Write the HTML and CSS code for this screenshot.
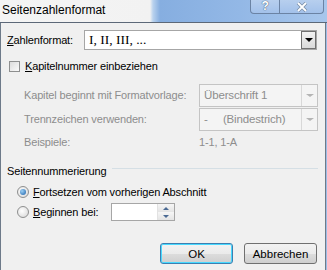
FILE: index.html
```html
<!DOCTYPE html>
<html lang="de">
<head>
    <meta charset="UTF-8">
    <title>Seitenzahlenformat</title>
    <link rel="stylesheet" href="styles.css">
</head>
<body>
    <div class="window">
        <div class="titlebar">
            <span class="title">Seitenzahlenformat</span>
            <div class="caption-buttons">
                <span class="cap-btn help">?</span>
                <span class="cap-btn close">
                    <svg width="12" height="10" viewBox="0 0 12 10"><path d="M2 1 L10 9 M10 1 L2 9" stroke="#7a8ea8" stroke-width="3.4"/><path d="M2 1 L10 9 M10 1 L2 9" stroke="#fff" stroke-width="1.8" fill="none"/></svg>
                </span>
            </div>
        </div>
        <div class="dialog">
            <div class="row format-row">
                <label class="lbl"><u>Z</u>ahlenformat:</label>
                <div class="select serif">
                    <span class="value">I, II, III, ...</span>
                    <span class="drop"><i class="arrow"></i></span>
                </div>
            </div>

            <div class="check-row">
                <span class="checkbox"></span>
                <span><u>K</u>apitelnummer einbeziehen</span>
            </div>

            <div class="chapter">
                <div class="row sub">
                    <span class="sub-lbl">Kapitel beginnt mit Formatvorlage:</span>
                    <div class="select disabled">
                        <span class="value">Überschrift 1</span>
                        <span class="drop"><i class="arrow"></i></span>
                    </div>
                </div>
                <div class="row sub">
                    <span class="sub-lbl">Trennzeichen verwenden:</span>
                    <div class="select disabled">
                        <span class="value">-&nbsp;&nbsp;&nbsp;&nbsp;&nbsp;(Bindestrich)</span>
                        <span class="drop"><i class="arrow"></i></span>
                    </div>
                </div>
                <div class="row sub example">
                    <span class="sub-lbl">Beispiele:</span>
                    <span class="example-val">1-1, 1-A</span>
                </div>
            </div>

            <div class="group-head">
                <span>Seitennummerierung</span>
                <span class="group-line"></span>
            </div>

            <div class="radio-row first">
                <span class="radio checked"></span>
                <span><u>F</u>ortsetzen vom vorherigen Abschnitt</span>
            </div>
            <div class="radio-row">
                <span class="radio"></span>
                <span class="start-lbl"><u>B</u>eginnen bei:</span>
                <div class="spin">
                    <span class="spin-btns">
                        <span class="spin-btn"><i class="up"></i></span>
                        <span class="spin-btn"><i class="down"></i></span>
                    </span>
                </div>
            </div>

            <div class="buttons">
                <button class="btn default">OK</button>
                <button class="btn">Abbrechen</button>
            </div>
        </div>
    </div>
</body>
</html>
```

FILE: styles.css
```css
body {
    margin: 0;
    font-family: "Liberation Sans", Arial, sans-serif;
    font-size: 11px;
    letter-spacing: -0.15px;
    color: #000;
    background: #9dbde6;
}
.window {
    width: 327px;
    height: 270px;
    overflow: hidden;
    white-space: nowrap;
}
.titlebar {
    height: 22px;
    position: relative;
    background: linear-gradient(90deg, #f4f4f4 0, #f2f2f2 150px, #b9d2ee 153px, #86aee0 160px, #93b8e6 240px, #a7c6ec 327px);
    border-bottom: 1px solid #5c6878;
}
.title {
    position: absolute;
    left: 2px;
    top: 3px;
    font-size: 12px;
    letter-spacing: 0;
    color: #000;
}
.caption-buttons {
    position: absolute;
    left: 250px;
    top: 0;
    width: 72px;
    height: 13px;
    display: flex;
    border: 1px solid #6b83a4;
    border-top: none;
    border-radius: 0 0 4px 4px;
    background: linear-gradient(#b7cfee, #a3c1ea);
}
.cap-btn {
    flex: 1;
    display: flex;
    align-items: center;
    justify-content: center;
    color: #fff;
    font-weight: bold;
    font-size: 12px;
    line-height: 11px;
    text-shadow: 0 0 1px #3d5677, 0 0 1px #3d5677;
}
.help {
    flex: 0 0 28px;
    border-right: 1px solid #6b83a4;
}
.dialog {
    background: #f0f0f0;
    border-left: 1px solid #6d7a89;
    border-right: 1px solid #6d7a89;
    width: 324px;
    height: 247px;
}
.row {
    display: flex;
    align-items: center;
}
.format-row {
    padding: 7px 0 0 6px;
    height: 20px;
}
.lbl {
    width: 77px;
    flex-shrink: 0;
}
u {
    text-decoration: underline;
    text-underline-offset: 1px;
}
.select {
    display: flex;
    align-items: center;
    background: #fff;
    border: 1px solid #a6a6a6;
    box-sizing: border-box;
    height: 20px;
    width: 233px;
    flex-shrink: 0;
}
.select .value {
    flex: 1;
    padding-left: 4px;
}
.serif {
    font-family: "Liberation Serif", serif;
    font-size: 13.5px;
    letter-spacing: 0;
}
.drop {
    width: 15px;
    height: 18px;
    box-sizing: border-box;
    border: 1px solid #707070;
    background: linear-gradient(#f2f2f2, #d9d9d9);
    display: flex;
    align-items: center;
    justify-content: center;
}
.arrow {
    width: 0;
    height: 0;
    border-left: 4px solid transparent;
    border-right: 4px solid transparent;
    border-top: 4px solid #000;
}
.check-row {
    display: flex;
    align-items: center;
    padding: 10px 0 0 8px;
    gap: 5px;
}
.checkbox {
    width: 11px;
    height: 11px;
    border: 1px solid #8e8f8f;
    background: linear-gradient(135deg, #dcdcdc, #fafafa);
    box-sizing: border-box;
}
.chapter {
    padding: 11px 0 0 23px;
    color: #8d8d8d;
}
.sub {
    height: 24px;
}
.sub-lbl {
    width: 175px;
    flex-shrink: 0;
}
.select.disabled {
    width: 119px;
    height: 23px;
    border-color: #c4c4c4;
    background: #f4f4f4;
    font-size: 11.5px;
}
.select.disabled .drop {
    width: 16px;
    height: 21px;
    border: none;
    border-left: 1px solid #d8d8d8;
    background: #f4f4f4;
}
.select.disabled .arrow {
    border-top-color: #b4b4b4;
    border-top-width: 3px;
}
.example {
    height: 22px;
}
.group-head {
    display: flex;
    align-items: center;
    gap: 6px;
    padding: 12px 7px 0 6px;
}
.group-line {
    flex: 1;
    height: 1px;
    margin-top: -5px;
    background: #d5dfe5;
}
.radio-row {
    display: flex;
    align-items: center;
    padding-left: 16px;
    height: 20px;
    gap: 4px;
}
.radio-row.first {
    margin-top: 5px;
}
.radio {
    width: 12px;
    height: 12px;
    border-radius: 50%;
    border: 1px solid #8e8f8f;
    box-sizing: border-box;
    background: radial-gradient(circle at 40% 40%, #fff, #d4d4d4);
    position: relative;
}
.radio.checked::after {
    content: "";
    position: absolute;
    left: 2px;
    top: 2px;
    width: 6px;
    height: 6px;
    border-radius: 50%;
    background: radial-gradient(circle at 35% 35%, #9bd0f5, #1a5ea8);
}
.start-lbl {
    width: 74px;
}
.spin {
    width: 64px;
    height: 18px;
    border: 1px solid #a6a6a6;
    box-sizing: border-box;
    background: #fff;
    display: flex;
    justify-content: flex-end;
}
.spin-btns {
    width: 16px;
    display: flex;
    flex-direction: column;
    border-left: 1px solid #e2e2e2;
}
.spin-btn {
    flex: 1;
    display: flex;
    align-items: center;
    justify-content: center;
    background: linear-gradient(#f6f6f6, #e4e4e4);
}
.up, .down {
    width: 0;
    height: 0;
    border-left: 3px solid transparent;
    border-right: 3px solid transparent;
}
.up {
    border-bottom: 3px solid #4b6a93;
}
.down {
    border-top: 3px solid #4b6a93;
}
.buttons {
    display: flex;
    justify-content: flex-end;
    gap: 11px;
    padding: 21px 8px 0 0;
}
.btn {
    width: 73px;
    height: 21px;
    font: inherit;
    font-size: 11.5px;
    border: 1px solid #707070;
    border-radius: 3px;
    background: linear-gradient(#f2f2f2 0, #ebebeb 50%, #dddddd 51%, #cfcfcf 100%);
    padding: 0;
}
.btn.default {
    border-color: #3c7fb1;
    box-shadow: inset 0 0 0 1px #48d9ff;
}
```
